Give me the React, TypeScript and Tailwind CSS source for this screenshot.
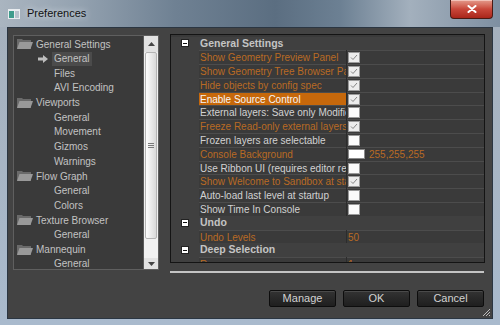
import React from 'react';

type TreeItem = { label: string; cat?: boolean; sel?: boolean };

const treeItems: TreeItem[] = [
  { label: 'General Settings', cat: true },
  { label: 'General', sel: true },
  { label: 'Files' },
  { label: 'AVI Encoding' },
  { label: 'Viewports', cat: true },
  { label: 'General' },
  { label: 'Movement' },
  { label: 'Gizmos' },
  { label: 'Warnings' },
  { label: 'Flow Graph', cat: true },
  { label: 'General' },
  { label: 'Colors' },
  { label: 'Texture Browser', cat: true },
  { label: 'General' },
  { label: 'Mannequin', cat: true },
  { label: 'General' },
];

type Row =
  | { kind: 'cat'; label: string }
  | { kind: 'prop'; label: string; mod?: boolean; sel?: boolean; value: 'on' | 'off' | 'color' | string };

const rows: Row[] = [
  { kind: 'cat', label: 'General Settings' },
  { kind: 'prop', label: 'Show Geometry Preview Panel', mod: true, value: 'on' },
  { kind: 'prop', label: 'Show Geometry Tree Browser Panel', mod: true, value: 'on' },
  { kind: 'prop', label: 'Hide objects by config spec', mod: true, value: 'on' },
  { kind: 'prop', label: 'Enable Source Control', sel: true, value: 'on' },
  { kind: 'prop', label: 'External layers: Save only Modified', value: 'off' },
  { kind: 'prop', label: 'Freeze Read-only external layers', mod: true, value: 'on' },
  { kind: 'prop', label: 'Frozen layers are selectable', value: 'off' },
  { kind: 'prop', label: 'Console Background', mod: true, value: 'color' },
  { kind: 'prop', label: 'Use Ribbon UI (requires editor restart)', value: 'off' },
  { kind: 'prop', label: 'Show Welcome to Sandbox at startup', mod: true, value: 'on' },
  { kind: 'prop', label: 'Auto-load last level at startup', value: 'off' },
  { kind: 'prop', label: 'Show Time In Console', value: 'off' },
  { kind: 'cat', label: 'Undo' },
  { kind: 'prop', label: 'Undo Levels', mod: true, value: '50' },
  { kind: 'cat', label: 'Deep Selection' },
  { kind: 'prop', label: 'Range', mod: true, value: '1' },
];

function Folder() {
  return (
    <svg width="16" height="12" viewBox="0 0 16 12">
      <path d="M0 1h5l1 1h8v9H0z" fill="#6a6a6a" />
      <path d="M2.5 4H16l-2.5 7H0z" fill="#999" />
    </svg>
  );
}

function Check({ on }: { on: boolean }) {
  return (
    <div className={`w-[12px] h-[11px] border border-[#9a9a9a] ${on ? 'bg-[#ececec]' : 'bg-[#fbfbfb]'}`}>
      {on && (
        <svg width="10" height="9" viewBox="0 0 10 9">
          <polyline points="2,4.5 4,6.5 8,2" fill="none" stroke="#858585" strokeWidth="1" />
        </svg>
      )}
    </div>
  );
}

function Tree() {
  return (
    <div className="mt-[1px] w-[146px] h-[235px] shrink-0 flex border border-[#5f5f5f] bg-[#3a3a3a]">
      <div className="flex-1 pt-[1px] overflow-hidden">
        {treeItems.map((t, i) =>
          t.cat ? (
            <div key={i} className="h-[14.67px] flex items-center pl-[3px] gap-[3px] text-[#c2c2c2]">
              <Folder />
              <span>{t.label}</span>
            </div>
          ) : (
            <div key={i} className="h-[14.67px] flex items-center pl-[24px] text-[#c2c2c2]">
              <span className="w-[14px] flex items-center">
                {t.sel && (
                  <svg width="10" height="8" viewBox="0 0 10 8">
                    <path d="M0 2.5h5V0l5 4-5 4V5.5H0z" fill="#bdbdbd" />
                  </svg>
                )}
              </span>
              <span className={`px-[2px] leading-[14px] ${t.sel ? 'bg-[#4b4b4b]' : ''}`}>{t.label}</span>
            </div>
          )
        )}
      </div>
      <div className="w-[15px] flex flex-col border-l border-[#5a5a5a] bg-[#f1f1f1]">
        <div className="h-[16px] flex items-center justify-center bg-[#e2e2e2]">
          <svg width="7" height="4" viewBox="0 0 7 4">
            <path d="M0 4L3.5 0 7 4z" fill="#444" />
          </svg>
        </div>
        <div className="h-[187px] mx-[1px] rounded-[2px] border border-[#b4b4b4] bg-gradient-to-r from-[#fdfdfd] to-[#d9d9d9] flex flex-col items-center justify-center gap-[1px]">
          <div className="w-[6px] h-px bg-[#7a7a7a]" />
          <div className="w-[6px] h-px bg-[#7a7a7a]" />
          <div className="w-[6px] h-px bg-[#7a7a7a]" />
        </div>
        <div className="flex-1" />
        <div className="h-[11px] flex items-center justify-center bg-[#e2e2e2]">
          <svg width="7" height="4" viewBox="0 0 7 4">
            <path d="M0 0h7L3.5 4z" fill="#444" />
          </svg>
        </div>
      </div>
    </div>
  );
}

function Grid() {
  return (
    <div className="h-[229px] border border-[#141414] bg-[#3a3a3a] pt-[1.5px] overflow-hidden">
      {rows.map((r, i) =>
        r.kind === 'cat' ? (
          <div key={i} className="h-[13.8px] flex items-center bg-[#404040]">
            <div className="w-[28px] pl-[10px] flex items-center">
              <div className="w-[8px] h-[8px] bg-white border border-[#222] flex items-center justify-center">
                <div className="w-[4px] h-px bg-[#111]" />
              </div>
            </div>
            <span className="pl-[1px] font-bold text-[10.5px] text-[#c4c4c4]">{r.label}</span>
          </div>
        ) : (
          <div key={i} className="h-[13.8px] flex">
            <div className="w-[28px] shrink-0 bg-[#404040]" />
            <div
              className={`w-[147px] shrink-0 flex items-center pl-[1px] border-t border-[#4c4c4c] overflow-hidden whitespace-nowrap ${
                r.sel ? 'bg-[#c6680b] text-[#f6f6f6]' : r.mod ? 'text-[#b96a24]' : 'text-[#d2d2d2]'
              }`}
            >
              {r.label}
            </div>
            <div className="w-px shrink-0 bg-[#2c2c2c]" />
            <div className="flex-1 flex items-center pl-[1px] gap-[4px] border-t border-[#4c4c4c]">
              {r.value === 'on' && <Check on />}
              {r.value === 'off' && <Check on={false} />}
              {r.value === 'color' && (
                <>
                  <div className="w-[17px] h-[10px] bg-white border border-[#8a8a8a]" />
                  <span className="text-[#b96a24]">255,255,255</span>
                </>
              )}
              {r.value !== 'on' && r.value !== 'off' && r.value !== 'color' && (
                <span className="text-[#b96a24]">{r.value}</span>
              )}
            </div>
          </div>
        )
      )}
    </div>
  );
}

function Btn({ label }: { label: string }) {
  return (
    <button className="w-[67px] h-[17px] rounded-[2px] border border-[#0d0d0d] bg-gradient-to-b from-[#333] to-[#1f1f1f] shadow-[inset_0_1px_0_#4a4a4a] text-[11px] text-[#d2d2d2] leading-none">
      {label}
    </button>
  );
}

export default function App() {
  return (
    <div className="w-[500px] h-[325px] flex flex-col bg-gradient-to-b from-[#a5b0bc] to-[#a9bacd] font-['Liberation_Sans',Arial,sans-serif] text-[10px] relative overflow-hidden">
      {/* title bar */}
      <div className="h-[27px] shrink-0 flex items-center pl-[8px] gap-[7px] bg-[linear-gradient(90deg,#aab5c0_0%,#95a3b1_15%,#6f8193_35%,#5b6e81_55%,#6c8093_68%,#a3b0bd_82%,#7e8fa1_100%)]">
        <svg width="12" height="10" viewBox="0 0 12 10">
          <rect x="0" y="0" width="12" height="10" fill="#e8ecef" />
          <rect x="1" y="2" width="5" height="7" fill="#3f9c8c" />
          <rect x="7" y="2" width="4" height="7" fill="#b8c2cc" />
        </svg>
        <span className="text-[11px] text-[#111] [text-shadow:0_0_6px_#e6ecf2]">Preferences</span>
      </div>
      <div className="absolute top-0 right-[7px] w-[43px] h-[19px] rounded-b-[4px] border border-[#4a1a14] border-t-0 bg-gradient-to-b from-[#e39a8c] via-[#c9473a] to-[#a9251a] flex items-center justify-center shadow-[inset_0_1px_0_#f2c2b8]">
        <svg width="10" height="8" viewBox="0 0 10 8">
          <path d="M1.5 1L8.5 7M8.5 1L1.5 7" stroke="#fff" strokeWidth="2" strokeLinecap="round" />
        </svg>
      </div>

      {/* content */}
      <div className="flex-1 ml-[7px] mr-[7px] mb-[6px] border border-[#2b3642] bg-[#434343] pl-[5px] pr-[7px] pt-[6px] flex gap-[11px] relative">
        <Tree />
        <div className="flex-1 flex flex-col">
          <Grid />
          <div className="mt-[8px] h-[2px] mr-[1px] bg-[#c4c4c4]" />
          <div className="mt-[17px] flex justify-end gap-[7px] pr-[1px]">
            <Btn label="Manage" />
            <Btn label="OK" />
            <Btn label="Cancel" />
          </div>
        </div>
        <svg className="absolute right-[1px] bottom-[1px]" width="9" height="9" viewBox="0 0 9 9">
          <path d="M8 1L1 8M8 4L4 8M8 7L7 8" stroke="#bdbdbd" strokeWidth="1" />
        </svg>
      </div>
    </div>
  );
}
